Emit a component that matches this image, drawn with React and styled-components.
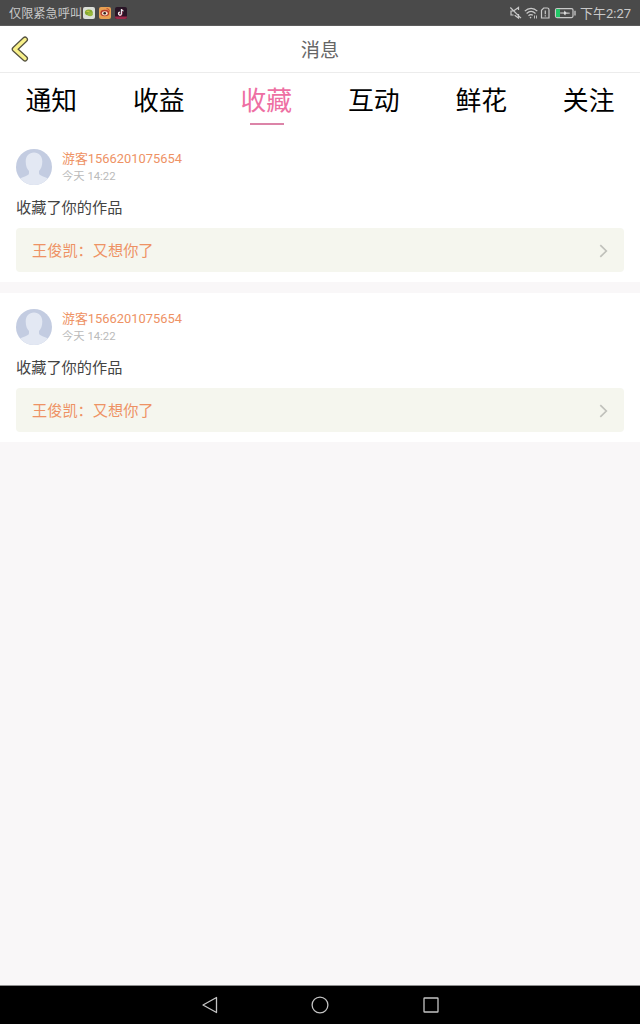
import React from 'react';
import styled, { createGlobalStyle } from 'styled-components';

const GlobalStyle = createGlobalStyle`
  * {
    box-sizing: border-box;
  }
  body {
    margin: 0;
    background: #f9f7f8;
    font-family: Roboto, 'Noto Sans CJK SC', sans-serif;
  }
`;

const Screen = styled.div`
  display: flex;
  flex-direction: column;
  height: 1024px;
  overflow: hidden;
`;

const StatusBar = styled.div`
  display: flex;
  flex: none;
  align-items: center;
  justify-content: space-between;
  height: 26px;
  padding: 0 9px;
  background: #4a4a4a;
  border-bottom: 1px solid #5c5c5c;
  color: #c9c9c9;
  font-size: 12.2px;
  line-height: 24px;
  white-space: nowrap;
`;

const StatusGroup = styled.div`
  display: flex;
  align-items: center;
  svg {
    display: block;
  }
`;

const Carrier = styled.span`
  padding-top: 3px;
  line-height: 22px;
`;

const AppIcons = styled.div`
  display: flex;
  gap: 4px;
  margin-left: 1px;
`;

const Clock = styled.span`
  margin-left: 4px;
  padding-top: 2px;
  font-size: 13px;
  line-height: 23px;
`;

const Header = styled.header`
  display: grid;
  flex: none;
  grid-template-columns: 40px 1fr 40px;
  align-items: center;
  height: 47px;
  background: #fff;
  border-bottom: 1px solid #ececec;
  h1 {
    margin: 0;
    padding-top: 4px;
    color: #666;
    font-size: 19.2px;
    font-weight: 400;
    line-height: 28px;
    text-align: center;
  }
`;

const BackButton = styled.button`
  height: 46px;
  padding: 0 0 0 10px;
  border: 0;
  background: none;
  svg {
    display: block;
  }
`;

const Tabs = styled.nav`
  display: flex;
  flex: none;
  justify-content: space-between;
  height: 60px;
  padding: 9px 25.5px 0;
  background: #fff;
`;

const Tab = styled.div`
  display: flex;
  flex-direction: column;
  align-items: center;
  color: ${({ $active }) => ($active ? '#ee6fa3' : '#000')};
  font-size: 25.8px;
  line-height: 38px;
  &::after {
    content: '';
    width: 34px;
    height: 2px;
    margin: 3px 0 0 1px;
    background: ${({ $active }) => ($active ? '#dc84a8' : 'transparent')};
  }
`;

const List = styled.main`
  display: flex;
  flex-direction: column;
  gap: 11px;
`;

const Card = styled.article`
  height: 149px;
  padding: 16px 16px 0;
  background: #fff;
`;

const User = styled.div`
  display: flex;
  gap: 10px;
  height: 36px;
  svg {
    display: block;
  }
`;

const Name = styled.div`
  color: #ee9264;
  font-size: 12.9px;
  line-height: 19px;
`;

const Time = styled.div`
  padding-top: 1px;
  color: #bababa;
  font-size: 11.3px;
  line-height: 16px;
`;

const Action = styled.p`
  margin: 11px 0 8px;
  color: #444;
  font-size: 15.2px;
  line-height: 24px;
`;

const Work = styled.div`
  display: flex;
  align-items: center;
  justify-content: space-between;
  height: 44px;
  padding: 2px 16px 0;
  border-radius: 4px;
  background: #f5f6ee;
  color: #ee9264;
  font-size: 15.2px;
  line-height: 24px;
`;

const NavBar = styled.footer`
  display: flex;
  flex: none;
  align-items: center;
  justify-content: center;
  gap: 92.5px;
  height: 39px;
  margin-top: auto;
  background: #000;
  border-top: 1px solid #8e8e8e;
`;

const Avatar = () => (
  <svg width="36" height="36" viewBox="0 0 36 36">
    <defs>
      <clipPath id="avatar">
        <circle cx="18" cy="18" r="18" />
      </clipPath>
    </defs>
    <g clipPath="url(#avatar)">
      <rect width="36" height="36" fill="#c3cce1" />
      <path
        d="M18 3.500c5 0 8.300 3.600 8.300 9 0 4.500-1.300 7.500-3.300 9.500v2c0 1.400 1 2.200 3 2.900 3.500 1.200 6 2.200 7.500 4.400V37h-31v-5.700c1.500-2.200 4-3.200 7.500-4.400 2-.7 3-1.500 3-2.900v-2c-2-2-3.300-5-3.300-9.500 0-5.400 3.300-9 8.300-9z"
        fill="#e3e8f3"
      />
    </g>
  </svg>
);

const ChatIcon = () => (
  <svg width="12" height="12" viewBox="0 0 12 12">
    <rect width="12" height="12" rx="2" fill="#dcdfd8" />
    <ellipse cx="5.800" cy="5.500" rx="3.900" ry="3" fill="#86a92f" />
    <ellipse cx="7.200" cy="7.200" rx="2.600" ry="2.100" fill="#98b83c" />
    <path d="M3.500 4.300h3" stroke="#d8cf45" strokeWidth="1" />
  </svg>
);

const WeiboIcon = () => (
  <svg width="12" height="12" viewBox="0 0 12 12">
    <rect width="12" height="12" rx="2" fill="#e9a052" />
    <ellipse cx="5.800" cy="6" rx="4.400" ry="3.200" fill="#b83b2c" />
    <ellipse cx="5.800" cy="6.300" rx="2.900" ry="2.100" fill="#f4e4d0" />
    <circle cx="5.700" cy="6.300" r="1.300" fill="#33211c" />
    <path d="M7.500 1.800c2-.3 3 1 2.700 2.700" fill="none" stroke="#b83b2c" />
  </svg>
);

const TiktokIcon = () => (
  <svg width="12" height="12" viewBox="0 0 12 12">
    <rect width="12" height="12" rx="2" fill="#291526" />
    <path d="M0 9.500h12v.5a2 2 0 0 1-2 2H2a2 2 0 0 1-2-2z" fill="#9d294b" />
    <path d="M6.800 2v4.800a1.500 1.500 0 1 1-1.500-1.500" fill="none" stroke="#e05274" strokeWidth="1.300" />
    <path d="M6.400 2v4.600a1.500 1.500 0 1 1-1.500-1.500M6.400 2.200c.3 1.200 1 1.700 2.200 1.800" fill="none" stroke="#e8f1f2" strokeWidth="1.100" />
  </svg>
);

const StatusIcons = () => (
  <svg width="67" height="14" viewBox="0 0 67 14" fill="none" stroke="#c9c9c9" strokeWidth="1.200">
    {/* muted */}
    <path d="M9.500 6V2L5.700 4.800M4.500 5H2v4h2.500l5 3.500V10M1.300 12.500L12 1.800" transform="matrix(1 0 0 -1 0 14)" />
    {/* wifi */}
    <path d="M15.800 5.200c3.700-3.700 8.800-3.700 12.500 0M17.600 7.500c2.700-2.600 6.200-2.600 8.900 0M19.500 9.700c1.600-1.500 3-1.500 4.300-.5" />
    <circle cx="21.500" cy="11.600" r=".8" fill="#c9c9c9" stroke="none" />
    <path d="M25.500 9.500v3M27.500 9.500v3" strokeWidth=".9" />
    {/* sim */}
    <path d="M34.700 2h3.500a1.800 1.800 0 0 1 1.800 1.800V12h-7.500V4.300zM36.300 4.500v3.800M36.300 9.300v1.300" />
    {/* battery */}
    <rect x="46.500" y="2.600" width="17.500" height="9" rx="1.500" />
    <rect x="47" y="3.100" width="4" height="8" fill="#23c767" stroke="none" />
    <path d="M51.200 6.500l3.800-.1.500-1.900 1.700 2.100 3.600.2v.8l-3.900.1-.8 1.900-1.500-2-3.400-.2z" fill="#dedede" stroke="none" />
    <path d="M66 4.800v4.700" strokeWidth="1.300" />
  </svg>
);

const BackIcon = () => (
  <svg width="20" height="28" viewBox="0 0 20 28" fill="none" strokeLinecap="round" strokeLinejoin="round">
    <path d="M15 4.500L4.700 14.200 15 23.500" stroke="#55523f" strokeWidth="6" />
    <path d="M15 4.500L4.700 14.200 15 23.500" stroke="#f8f08a" strokeWidth="3.500" />
  </svg>
);

const Chevron = () => (
  <svg width="9" height="14" viewBox="0 0 9 14" fill="none" stroke="#c0c1bb" strokeWidth="1.700">
    <path d="M1.300 1.200L7.300 7l-6 5.800" />
  </svg>
);

const tabs = ['通知', '收益', '收藏', '互动', '鲜花', '关注'];

const messages = [
  { id: 1, name: '游客1566201075654', time: '今天 14:22', action: '收藏了你的作品', work: '王俊凯：又想你了' },
  { id: 2, name: '游客1566201075654', time: '今天 14:22', action: '收藏了你的作品', work: '王俊凯：又想你了' },
];

const Message = ({ name, time, action, work }) => (
  <Card>
    <User>
      <Avatar />
      <div>
        <Name>{name}</Name>
        <Time>{time}</Time>
      </div>
    </User>
    <Action>{action}</Action>
    <Work>
      <span>{work}</span>
      <Chevron />
    </Work>
  </Card>
);

const App = () => (
  <Screen>
    <GlobalStyle />
    <StatusBar>
      <StatusGroup>
        <Carrier>仅限紧急呼叫</Carrier>
        <AppIcons>
          <ChatIcon />
          <WeiboIcon />
          <TiktokIcon />
        </AppIcons>
      </StatusGroup>
      <StatusGroup>
        <StatusIcons />
        <Clock>下午2:27</Clock>
      </StatusGroup>
    </StatusBar>
    <Header>
      <BackButton aria-label="返回"><BackIcon /></BackButton>
      <h1>消息</h1>
    </Header>
    <Tabs>
      {tabs.map(tab => <Tab key={tab} $active={tab === '收藏'}>{tab}</Tab>)}
    </Tabs>
    <List>
      {messages.map(message => <Message key={message.id} {...message} />)}
    </List>
    <NavBar>
      <svg width="18" height="18" viewBox="0 0 18 18" fill="none" stroke="#c4c4c4" strokeWidth="1.300" strokeLinejoin="round">
        <path d="M15.500 1.500v15L2 9z" />
      </svg>
      <svg width="18" height="18" viewBox="0 0 18 18" fill="none" stroke="#c4c4c4" strokeWidth="1.300">
        <circle cx="9" cy="9" r="7.900" />
      </svg>
      <svg width="18" height="18" viewBox="0 0 18 18" fill="none" stroke="#c4c4c4" strokeWidth="1.300">
        <rect x="2" y="2" width="14" height="14" rx=".6" />
      </svg>
    </NavBar>
  </Screen>
);

export default App;
